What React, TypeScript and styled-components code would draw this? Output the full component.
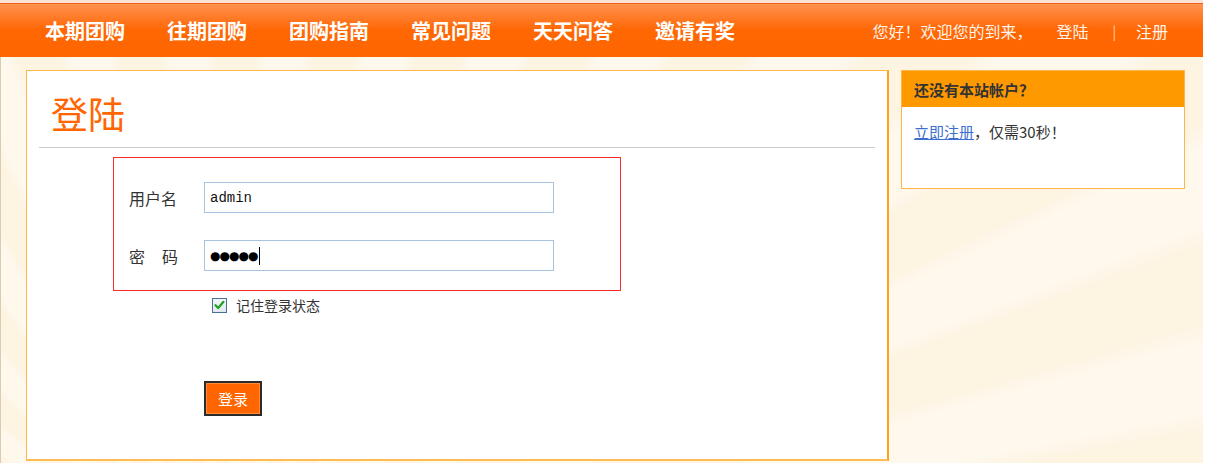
import React from "react";
import styled, { createGlobalStyle } from "styled-components";

const GlobalStyle = createGlobalStyle`
  html, body { margin: 0; padding: 0; background: #ffffff; }
  body { font-family: "Noto Sans CJK SC", "Noto Sans", sans-serif; }
  * { box-sizing: border-box; }
`;

const Page = styled.div`
  width: 1203px;
  height: 463px;
  display: flex;
  flex-direction: column;
`;

const Header = styled.header`
  height: 57px;
  flex: none;
  display: flex;
  align-items: center;
  justify-content: space-between;
  padding: 4px 35px 0 45px;
  background: linear-gradient(
    to bottom,
    #fbe4d6 0px,
    #fbe4d6 3px,
    #e9631c 3px,
    #e9631c 4px,
    #ff9350 4px,
    #ff7a26 18px,
    #ff6703 30px,
    #ff6600 57px
  );
`;

const Nav = styled.nav`
  display: flex;
  gap: 42px;
`;

const NavItem = styled.a`
  color: #ffffff;
  font-size: 20px;
  font-weight: 700;
  line-height: 24px;
  text-decoration: none;
  white-space: nowrap;
`;

const UserBar = styled.div`
  display: flex;
  align-items: center;
  color: #fff3ea;
  font-size: 16px;
  line-height: 20px;
  white-space: nowrap;
`;

const UserLink = styled.a<{ $gap: number }>`
  color: #fff3ea;
  text-decoration: none;
  margin-left: ${(p) => p.$gap}px;
`;

const Sep = styled.span`
  margin-left: 24px;
  font-size: 14px;
  font-weight: 300;
`;

const Body = styled.div`
  flex: 1;
  display: flex;
  align-items: flex-start;
  gap: 12px;
  padding: 13px 0 0 25px;
  border-left: 1px solid #d8ccb2;
  background-color: #fdf6e6;
  background-image: repeating-conic-gradient(
    from 10deg at 18% 135%,
    #fdf4e2 0deg 4deg,
    #fef8ed 5deg 9deg,
    #fdf4e2 10deg
  );
`;

const MainPanel = styled.section`
  width: 863px;
  height: 391px;
  background: #ffffff;
  border: 1px solid #ffb648;
  border-right: 2px solid #ffa41f;
  border-bottom: 2px solid #ffbc55;
  display: flex;
  flex-direction: column;
  align-items: flex-start;
`;

const Title = styled.h1`
  margin: 22px 0 0 24px;
  font-size: 37px;
  line-height: 40px;
  font-weight: 400;
  color: #ff6600;
`;

const Rule = styled.div`
  align-self: stretch;
  margin: 14px 12px 0 12px;
  height: 1px;
  background: #cccccc;
`;

const FormBox = styled.div`
  width: 508px;
  margin: 9px 0 0 86px;
  border: 1px solid #ff2a2a;
  padding: 24px 0 19px 15px;
  display: flex;
  flex-direction: column;
  gap: 27px;
`;

const FieldRow = styled.div`
  display: flex;
  align-items: center;
`;

const Label = styled.span`
  width: 75px;
  font-size: 16px;
  color: #333333;
  line-height: 20px;
`;

const Spread = styled.span`
  display: inline-block;
  width: 17px;
`;

const FakeInput = styled.div`
  width: 350px;
  height: 31px;
  border: 1px solid #a8c3dd;
  background: #ffffff;
  display: flex;
  align-items: center;
  padding-left: 5px;
`;

const InputText = styled.span`
  font-family: "Liberation Mono", "DejaVu Sans Mono", monospace;
  font-size: 14px;
  color: #111111;
`;

const Dots = styled.span`
  font-family: "DejaVu Sans", sans-serif;
  font-size: 12px;
  letter-spacing: -1px;
  color: #000000;
`;

const Caret = styled.span`
  display: inline-block;
  width: 1px;
  height: 18px;
  background: #000000;
  margin-left: 2px;
`;

const RememberRow = styled.label`
  margin: 4px 0 0 185px;
  height: 20px;
  display: flex;
  align-items: center;
  gap: 9px;
  font-size: 14px;
  color: #333333;
`;

const CheckBox = styled.span`
  width: 15px;
  height: 15px;
  border: 1px solid #4a6f96;
  background: linear-gradient(#f2f6fa, #dfe8f1);
  display: flex;
  align-items: center;
  justify-content: center;
`;

const SubmitButton = styled.button`
  margin: 66px 0 0 177px;
  width: 58px;
  height: 35px;
  background: #ff6600;
  border: 2px solid #2b2b2b;
  box-shadow: inset 0 0 0 1px #ff8a3a;
  color: #ffffff;
  font-family: "Noto Sans CJK SC", sans-serif;
  font-size: 15px;
  padding: 0;
  cursor: pointer;
`;

const SideBox = styled.aside`
  width: 284px;
  background: #ffffff;
  border: 1px solid #ffb547;
`;

const SideHead = styled.div`
  height: 36px;
  background: #ff9900;
  display: flex;
  align-items: center;
  padding-left: 12px;
  font-size: 15px;
  font-weight: 700;
  color: #333333;
`;

const SideBody = styled.div`
  height: 81px;
  padding: 15px 0 0 12px;
  font-size: 15px;
  line-height: 20px;
  color: #333333;
`;

const RegLink = styled.a`
  color: #3d6fd0;
  text-decoration: underline;
`;

export default function App() {
  const navs = ["本期团购", "往期团购", "团购指南", "常见问题", "天天问答", "邀请有奖"];
  return (
    <>
      <GlobalStyle />
      <Page>
        <Header>
          <Nav>
            {navs.map((n) => (
              <NavItem key={n} href="#">
                {n}
              </NavItem>
            ))}
          </Nav>
          <UserBar>
            <span>您好！欢迎您的到来，</span>
            <UserLink $gap={24} href="#">
              登陆
            </UserLink>
            <Sep>|</Sep>
            <UserLink $gap={20} href="#">
              注册
            </UserLink>
          </UserBar>
        </Header>
        <Body>
          <MainPanel>
            <Title>登陆</Title>
            <Rule />
            <FormBox>
              <FieldRow>
                <Label>用户名</Label>
                <FakeInput>
                  <InputText>admin</InputText>
                </FakeInput>
              </FieldRow>
              <FieldRow>
                <Label>
                  密<Spread />码
                </Label>
                <FakeInput>
                  <Dots>●●●●●</Dots>
                  <Caret />
                </FakeInput>
              </FieldRow>
            </FormBox>
            <RememberRow>
              <CheckBox>
                <svg width="11" height="10" viewBox="0 0 11 10">
                  <path
                    d="M1.5 5.2 L4.2 8 L9.5 1.8"
                    fill="none"
                    stroke="#21a121"
                    strokeWidth="2.2"
                    strokeLinecap="round"
                    strokeLinejoin="round"
                  />
                </svg>
              </CheckBox>
              记住登录状态
            </RememberRow>
            <SubmitButton type="button">登录</SubmitButton>
          </MainPanel>
          <SideBox>
            <SideHead>还没有本站帐户？</SideHead>
            <SideBody>
              <RegLink href="#">立即注册</RegLink>，仅需30秒！
            </SideBody>
          </SideBox>
        </Body>
      </Page>
    </>
  );
}
